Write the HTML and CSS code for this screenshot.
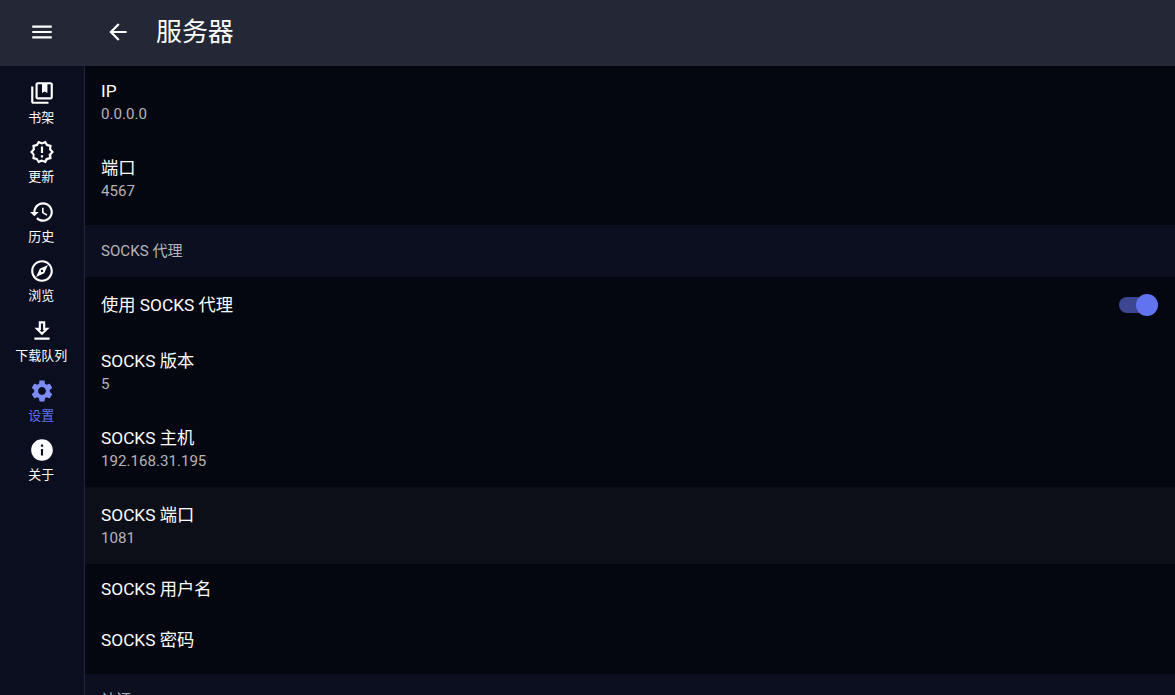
FILE: index.html
```html
<!DOCTYPE html>
<html lang="zh-CN">
<head>
<meta charset="utf-8">
<title>服务器</title>
<link rel="stylesheet" href="styles.css">
</head>
<body>
<div class="app">
  <header class="topbar">
    <div class="menu-slot">
      <svg class="icon" viewBox="0 0 24 24"><path d="M3 18h18v-2H3v2zm0-5h18v-2H3v2zm0-7v2h18V6H3z"/></svg>
    </div>
    <div class="back-slot">
      <svg class="icon" viewBox="0 0 24 24"><path d="M20 11H7.83l5.59-5.59L12 4l-8 8 8 8 1.41-1.41L7.83 13H20v-2z"/></svg>
    </div>
    <h1 class="title">服务器</h1>
  </header>
  <div class="body">
    <nav class="rail">
      <a class="rail-item">
        <svg class="icon" viewBox="0 0 24 24"><path d="M4 6H2v14c0 1.1.9 2 2 2h14v-2H4V6zm16-4H8c-1.1 0-2 .9-2 2v12c0 1.1.9 2 2 2h12c1.1 0 2-.9 2-2V4c0-1.1-.9-2-2-2zm0 14H8V4h4v8l2.5-1.5L17 12V4h3v12z"/></svg>
        <span class="rail-label">书架</span>
      </a>
      <a class="rail-item">
        <svg class="icon" viewBox="0 0 24 24"><path d="M23 12l-2.44-2.78.34-3.68-3.61-.82-1.89-3.18L12 3 8.6 1.54 6.71 4.72l-3.61.81.34 3.68L1 12l2.44 2.78-.34 3.69 3.61.82 1.89 3.18L12 21l3.4 1.46 1.89-3.18 3.61-.82-.34-3.68L23 12zm-4.28 1.46l-.56.65.08.85.18 1.95-1.9.43-.84.19-.44.74-.99 1.68-1.78-.77-.79-.34-.79.34-1.78.77-.99-1.67-.44-.74-.84-.19-1.9-.43.18-1.96.08-.85-.56-.65L3.67 12l1.29-1.47.56-.65-.09-.86-.18-1.94 1.9-.43.84-.19.44-.74.99-1.68 1.78.77.79.34.79-.34 1.78-.77.99 1.68.44.74.84.19 1.9.43-.18 1.95-.08.85.56.65 1.29 1.47-1.28 1.46z"/><path d="M11 15h2v2h-2zm0-8h2v6h-2z"/></svg>
        <span class="rail-label">更新</span>
      </a>
      <a class="rail-item">
        <svg class="icon" viewBox="0 0 24 24"><path d="M13 3c-4.97 0-9 4.03-9 9H1l3.89 3.89.07.14L9 12H6c0-3.87 3.13-7 7-7s7 3.13 7 7-3.13 7-7 7c-1.93 0-3.68-.79-4.94-2.06l-1.42 1.42C8.27 19.99 10.51 21 13 21c4.97 0 9-4.03 9-9s-4.03-9-9-9zm-1 5v5l4.28 2.54.72-1.21-3.5-2.08V8H12z"/></svg>
        <span class="rail-label">历史</span>
      </a>
      <a class="rail-item">
        <svg class="icon" viewBox="0 0 24 24"><path d="M12 2C6.48 2 2 6.48 2 12s4.48 10 10 10 10-4.48 10-10S17.52 2 12 2zm0 18c-4.41 0-8-3.59-8-8s3.59-8 8-8 8 3.59 8 8-3.59 8-8 8zm-5.5-2.5l7.51-3.49L17.5 6.5 9.99 9.99 6.5 17.5zm5.5-6.6c.61 0 1.1.49 1.1 1.1s-.49 1.1-1.1 1.1-1.1-.49-1.1-1.1.49-1.1 1.1-1.1z"/></svg>
        <span class="rail-label">浏览</span>
      </a>
      <a class="rail-item">
        <svg class="icon" viewBox="0 0 24 24"><path d="M19 9h-4V3H9v6H5l7 7 7-7zm-8 2V5h2v6h1.17L12 13.17 9.83 11H11zm-6 7h14v2H5z"/></svg>
        <span class="rail-label">下载队列</span>
      </a>
      <a class="rail-item active">
        <svg class="icon" viewBox="0 0 24 24"><path d="M19.14 12.94c.04-.3.06-.61.06-.94 0-.32-.02-.64-.07-.94l2.03-1.58c.18-.14.23-.41.12-.61l-1.92-3.32c-.12-.22-.37-.29-.59-.22l-2.39.96c-.5-.38-1.03-.7-1.62-.94l-.36-2.54c-.04-.24-.24-.41-.48-.41h-3.84c-.24 0-.43.17-.47.41l-.36 2.54c-.59.24-1.13.57-1.62.94l-2.39-.96c-.22-.08-.47 0-.59.22L2.74 8.87c-.12.21-.08.47.12.61l2.03 1.58c-.05.3-.09.63-.09.94s.02.64.07.94l-2.03 1.58c-.18.14-.23.41-.12.61l1.92 3.32c.12.22.37.29.59.22l2.39-.96c.5.38 1.03.7 1.62.94l.36 2.54c.05.24.24.41.48.41h3.84c.24 0 .44-.17.47-.41l.36-2.54c.59-.24 1.13-.56 1.62-.94l2.39.96c.22.08.47 0 .59-.22l1.92-3.32c.12-.22.07-.47-.12-.61l-2.01-1.58zM12 15.6c-1.98 0-3.6-1.62-3.6-3.6s1.62-3.6 3.6-3.6 3.6 1.62 3.6 3.6-1.62 3.6-3.6 3.6z"/></svg>
        <span class="rail-label">设置</span>
      </a>
      <a class="rail-item">
        <svg class="icon" viewBox="0 0 24 24"><path d="M12 2C6.48 2 2 6.48 2 12s4.48 10 10 10 10-4.48 10-10S17.52 2 12 2zm1 15h-2v-6h2v6zm0-8h-2V7h2v2z"/></svg>
        <span class="rail-label">关于</span>
      </a>
    </nav>
    <main class="content">
      <div class="list">
        <section class="group">
          <div class="row"><div class="row-title">IP</div><div class="row-sub">0.0.0.0</div></div>
          <div class="row"><div class="row-title">端口</div><div class="row-sub">4567</div></div>
        </section>
        <div class="section-head">SOCKS 代理</div>
        <section class="group">
          <div class="row switch-row">
            <div class="row-title">使用 SOCKS 代理</div>
            <div class="switch"><span class="switch-track"></span><span class="switch-thumb"></span></div>
          </div>
          <div class="row"><div class="row-title">SOCKS 版本</div><div class="row-sub">5</div></div>
          <div class="row"><div class="row-title">SOCKS 主机</div><div class="row-sub">192.168.31.195</div></div>
          <div class="row hover"><div class="row-title">SOCKS 端口</div><div class="row-sub">1081</div></div>
          <div class="row single"><div class="row-title">SOCKS 用户名</div></div>
          <div class="row single"><div class="row-title">SOCKS 密码</div></div>
        </section>
        <div class="section-head">认证</div>
      </div>
    </main>
  </div>
</div>
</body>
</html>
```

FILE: styles.css
```css
* { box-sizing: border-box; }
html, body { margin: 0; height: 100%; overflow: hidden; }
body {
  background: #04070f;
  color: #fff;
  font-family: Roboto, "Noto Sans CJK SC", sans-serif;
}
.app { display: flex; flex-direction: column; height: 695px; }
.icon { display: block; width: 26px; height: 26px; fill: currentColor; }

.topbar {
  flex: none;
  height: 66px;
  display: flex;
  align-items: center;
  padding-bottom: 3px;
  background: #232736;
}
.menu-slot { width: 84px; display: flex; justify-content: center; }
.back-slot { width: 72px; display: flex; justify-content: center; padding-right: 5px; }
.title { margin: 0; font-size: 25.92px; font-weight: 400; line-height: 32px; }

.body { flex: 1; display: flex; min-height: 0; }
.rail {
  flex: none;
  width: 85px;
  background: #0b0e1f;
  border-right: 1px solid #23273a;
  display: flex;
  flex-direction: column;
  padding-top: 13.5px;
}
.rail-item {
  height: 59.67px;
  display: flex;
  flex-direction: column;
  align-items: center;
}
.rail-label { font-size: 12.96px; line-height: 16px; margin: 4px 1.5px 0 0; }
.active { color: #6071f2; }
.active .icon { color: #7d8bf2; }

.content { flex: 1; min-width: 0; overflow: hidden; }
.list { margin-top: -3px; }
.group { padding-bottom: 8px; }
.row {
  height: 77px;
  padding: 16px 16px 0;
}
.row-title { font-size: 17.28px; line-height: 24px; }
.row-sub { font-size: 15.12px; line-height: 24px; color: #b3b5bb; margin-top: -1px; }
.hover { background: #0c0f17; }
.single { height: 51px; padding-top: 13px; }
.section-head {
  height: 52px;
  padding: 0 16px 4px;
  display: flex;
  align-items: center;
  font-size: 15.12px;
  color: #b3b5bb;
  background: #0c0f20;
}
.switch-row {
  height: 56px;
  padding: 0 17px 0 16px;
  display: flex;
  align-items: center;
  justify-content: space-between;
}
.switch { position: relative; width: 40px; height: 22px; }
.switch-track {
  position: absolute;
  left: 1px;
  top: 3px;
  width: 34px;
  height: 16px;
  border-radius: 8px;
  background: #3d4690;
}
.switch-thumb {
  position: absolute;
  right: 0;
  top: 0;
  width: 22px;
  height: 22px;
  border-radius: 50%;
  background: #6273f0;
}
```
